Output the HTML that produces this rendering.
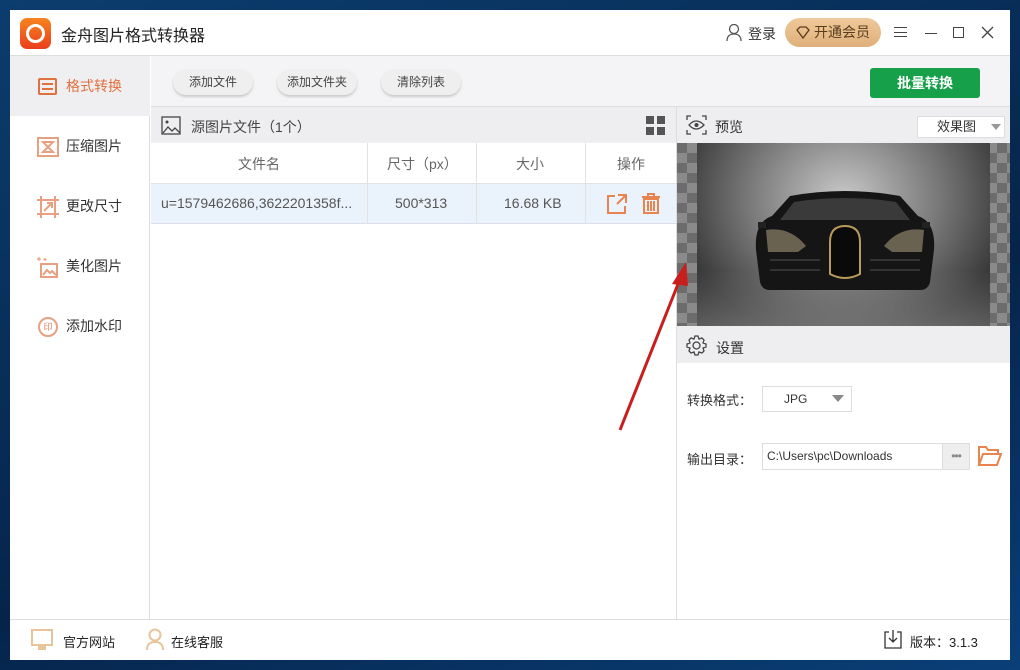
<!DOCTYPE html>
<html><head><meta charset="utf-8"><style>
*{margin:0;padding:0;box-sizing:border-box}
body{width:1020px;height:670px;background:linear-gradient(160deg,#0b3d6e,#06244a 60%,#0a3f78);font-family:"Liberation Sans","Noto Sans CJK SC",sans-serif;font-size:13px;color:#333;position:relative;overflow:hidden}
.win{position:absolute;left:10px;top:10px;width:1000px;height:650px;background:#fff}
.a{position:absolute}
.btn{position:absolute;top:69px;height:26px;border-radius:13px;background:#efefef;box-shadow:0 2px 2px #ccc;font-size:12px;color:#444;text-align:center;line-height:26px}
.side{position:absolute;left:0;width:140px;height:60px;font-size:14px;color:#333;line-height:60px;padding-left:56px}
.chk{background-color:#6c6c6c;background-image:linear-gradient(45deg,#8a8a8a 25%,transparent 25%,transparent 75%,#8a8a8a 75%),linear-gradient(45deg,#8a8a8a 25%,transparent 25%,transparent 75%,#8a8a8a 75%);background-size:20px 20px;background-position:0 0,10px 10px}
</style></head><body>
<div class="win"></div>
<div class="a" style="left:20px;top:18px;width:31px;height:31px;border-radius:7px;background:linear-gradient(#f7841e,#ea3e1c)"></div>
<div class="a" style="left:26px;top:24px;width:19px;height:19px;border-radius:50%;border:3px solid #fff"></div>
<div class="a" style="left:61px;top:22px;font-size:16px;color:#222">金舟图片格式转换器</div>
<svg class="a" style="left:726px;top:24px" width="16" height="17"><circle cx="8" cy="5" r="4.5" fill="none" stroke="#555" stroke-width="1.3"/><path d="M1 17c0-5 3-7 7-7s7 2 7 7" fill="none" stroke="#555" stroke-width="1.3"/></svg>
<div class="a" style="left:748px;top:24px;font-size:14px;color:#333">登录</div>
<div class="a" style="left:785px;top:18px;width:96px;height:29px;border-radius:15px;background:linear-gradient(#efc99a,#deb07a);font-size:14px;color:#5a3c1c;line-height:29px;padding-left:29px">开通会员</div>
<svg class="a" style="left:796px;top:26px" width="14" height="13"><path d="M1 4l3-3h6l3 3-6 8z" fill="none" stroke="#5a3c1c" stroke-width="1.3"/></svg>
<div class="a" style="left:894px;top:27px;width:13px;height:10px;border-top:1.3px solid #444;border-bottom:1.3px solid #444"></div>
<div class="a" style="left:894px;top:32px;width:13px;border-top:1.3px solid #444"></div>
<div class="a" style="left:925px;top:33px;width:12px;border-top:1.3px solid #444"></div>
<div class="a" style="left:953px;top:27px;width:11px;height:11px;border:1.3px solid #444"></div>
<svg class="a" style="left:981px;top:26px" width="13" height="13"><path d="M1 1l11 11M12 1L1 12" stroke="#444" stroke-width="1.3"/></svg>
<div class="a" style="left:10px;top:55px;width:1000px;border-top:1px solid #ddd"></div>
<div class="a" style="left:10px;top:56px;width:140px;height:563px;background:#fff;border-right:1px solid #ddd"></div>
<div class="side" style="left:10px;top:56px;background:#efeff1;color:#e07040">格式转换</div>
<div class="a" style="left:38px;top:78px;width:19px;height:17px;border:2px solid #e07040;border-radius:2px"></div>
<div class="a" style="left:42px;top:83px;width:11px;border-top:2px solid #e07040"></div><div class="a" style="left:42px;top:88px;width:11px;border-top:2px solid #e07040"></div>
<div class="side" style="left:10px;top:116px">压缩图片</div>
<svg class="a" style="left:37px;top:137px" width="22" height="20"><path d="M1 1h20v18H1zM6 5h10l-5 5 5 5H6l5-5z" fill="none" stroke="#e8a080" stroke-width="2"/></svg>
<div class="side" style="left:10px;top:176px">更改尺寸</div>
<svg class="a" style="left:37px;top:196px" width="22" height="22"><path d="M4 0v22M18 0v22M0 4h22M0 18h22M7 15l8-8M10 7h5v5" fill="none" stroke="#e8a080" stroke-width="2"/></svg>
<div class="side" style="left:10px;top:236px">美化图片</div>
<svg class="a" style="left:37px;top:256px" width="22" height="22"><path d="M4 8h16v13H4zM6 19l4-5 3 3 2-2 4 4" fill="none" stroke="#e8a080" stroke-width="2"/><path d="M2 1v4M0 3h4M8 2v3M6.5 3.5h3" stroke="#e8a080" stroke-width="1.2"/></svg>
<div class="side" style="left:10px;top:296px">添加水印</div>
<div class="a" style="left:38px;top:317px;width:20px;height:20px;border:2px solid #e8a080;border-radius:50%;font-size:9px;color:#e08060;text-align:center;line-height:16px">印</div>
<div class="a" style="left:151px;top:56px;width:859px;height:51px;background:#f4f4f6;border-bottom:1px solid #ddd"></div>
<div class="btn" style="left:173px;width:80px">添加文件</div>
<div class="btn" style="left:277px;width:80px">添加文件夹</div>
<div class="btn" style="left:381px;width:80px">清除列表</div>
<div class="a" style="left:870px;top:68px;width:110px;height:30px;border-radius:3px;background:#16a049;color:#fff;font-size:14px;font-weight:bold;text-align:center;line-height:30px">批量转换</div>
<div class="a" style="left:151px;top:107px;width:525px;height:36px;background:#eeeef1"></div>
<svg class="a" style="left:161px;top:116px" width="20" height="19"><rect x="1" y="1" width="18" height="17" fill="none" stroke="#444" stroke-width="1.3"/><path d="M2 17l5-6 4 4 3-3 5 5" fill="none" stroke="#444" stroke-width="1.3"/><circle cx="6" cy="6" r="1.5" fill="#444"/></svg>
<div class="a" style="left:191px;top:117px;font-size:14px;color:#444">源图片文件（1个）</div>
<div class="a" style="left:646px;top:116px;width:8px;height:8px;background:#555;box-shadow:11px 0 #555,0 11px #555,11px 11px #555"></div>
<div class="a" style="left:151px;top:143px;width:525px;height:41px;border-bottom:1px solid #e2e2e2"></div>
<div class="a" style="left:151px;top:184px;width:525px;height:40px;background:#eaf3fc;border-bottom:1px solid #dde"></div>
<div class="a" style="left:367px;top:143px;height:81px;border-left:1px solid #e2e2e2"></div>
<div class="a" style="left:476px;top:143px;height:81px;border-left:1px solid #e2e2e2"></div>
<div class="a" style="left:585px;top:143px;height:81px;border-left:1px solid #e2e2e2"></div>
<div class="a" style="left:238px;top:154px;font-size:14px;color:#666">文件名</div>
<div class="a" style="left:387px;top:154px;font-size:14px;color:#666">尺寸（px）</div>
<div class="a" style="left:516px;top:154px;font-size:14px;color:#666">大小</div>
<div class="a" style="left:617px;top:154px;font-size:14px;color:#666">操作</div>
<div class="a" style="left:161px;top:195px;font-size:14px;color:#555">u=1579462686,3622201358f...</div>
<div class="a" style="left:395px;top:195px;font-size:14px;color:#555">500*313</div>
<div class="a" style="left:504px;top:195px;font-size:14px;color:#555">16.68 KB</div>
<svg class="a" style="left:606px;top:193px" width="22" height="22"><path d="M9 3H2v17h17v-7M12 2h8v8M20 2l-9 9" fill="none" stroke="#e8844f" stroke-width="2"/></svg>
<svg class="a" style="left:641px;top:193px" width="20" height="21"><path d="M1 4h18M7 4V1h6v3M3 6h14v14H3zM7 8v10M10 8v10M13 8v10" fill="none" stroke="#e8844f" stroke-width="2"/></svg>
<div class="a" style="left:676px;top:107px;height:512px;border-left:1px solid #ddd"></div>
<div class="a" style="left:677px;top:107px;width:333px;height:36px;background:#eeeef1"></div>
<svg class="a" style="left:686px;top:115px" width="21" height="20"><path d="M1 5V1h4M16 1h4v4M20 15v4h-4M5 19H1v-4" fill="none" stroke="#444" stroke-width="1.3"/><path d="M3 10q7-8 15 0q-8 8-15 0z" fill="none" stroke="#444" stroke-width="1.3"/><circle cx="10.5" cy="10" r="2" fill="#444"/></svg>
<div class="a" style="left:715px;top:117px;font-size:14px;color:#333">预览</div>
<div class="a" style="left:917px;top:116px;width:88px;height:22px;background:#fff;border:1px solid #ddd;font-size:13px;line-height:20px;padding-left:19px;color:#333">效果图</div>
<div class="a" style="left:991px;top:124px;border:5px solid transparent;border-top:6px solid #999"></div>
<div class="a chk" style="left:677px;top:143px;width:333px;height:183px"></div>
<div class="a" style="left:697px;top:143px;width:293px;height:183px;background:radial-gradient(ellipse at 50% 30%,#c8c8c8,#7a7a7a 45%,#3a3a3a 80%,#222)"></div>
<div class="a" style="left:697px;top:270px;width:293px;height:56px;background:linear-gradient(transparent,rgba(150,150,150,.5))"></div>
<svg class="a" style="left:750px;top:190px" width="190" height="110">
<path d="M40 6Q95 -4 150 6L168 26Q186 32 184 60L180 92Q178 100 170 100H20Q12 100 10 92L6 60Q4 32 22 26Z" fill="#151515"/>
<path d="M44 12Q95 4 146 12L160 30H30Z" fill="#3a3a3a"/>
<path d="M8 32h8v6H8zM172 32h8v6h-8z" fill="#222"/>
<path d="M16 40Q40 36 56 56L48 62H18Z" fill="#6a6250"/>
<path d="M174 40Q150 36 134 56L142 62H172Z" fill="#6a6250"/>
<path d="M80 52Q80 36 95 36Q110 36 110 52V84Q95 92 80 84Z" fill="#0a0a0a" stroke="#b89a5a" stroke-width="2"/>
<path d="M20 70h50M120 70h50M20 80h50M120 80h50" stroke="#333" stroke-width="2"/>
</svg>
<div class="a" style="left:677px;top:326px;width:333px;height:37px;background:#eeeef1"></div>
<svg class="a" style="left:686px;top:335px" width="21" height="21"><circle cx="10.5" cy="10.5" r="3.5" fill="none" stroke="#444" stroke-width="1.3"/><path d="M9 1h3l1 3 3-1 2 2-1 3 3 1v3l-3 1 1 3-2 2-3-1-1 3H9l-1-3-3 1-2-2 1-3-3-1V9l3-1-1-3 2-2 3 1z" fill="none" stroke="#444" stroke-width="1.3"/></svg>
<div class="a" style="left:716px;top:338px;font-size:14px;color:#333">设置</div>
<div class="a" style="left:687px;top:390px;font-size:13px;color:#333">转换格式：</div>
<div class="a" style="left:762px;top:386px;width:90px;height:26px;border:1px solid #ddd;font-size:12px;line-height:24px;padding-left:21px">JPG</div>
<div class="a" style="left:832px;top:395px;border:6px solid transparent;border-top:7px solid #888"></div>
<div class="a" style="left:687px;top:449px;font-size:13px;color:#333">输出目录：</div>
<div class="a" style="left:762px;top:443px;width:208px;height:27px;border:1px solid #ddd;font-size:12px;line-height:25px;padding-left:4px;color:#333">C:\Users\pc\Downloads</div>
<div class="a" style="left:942px;top:444px;width:27px;height:25px;background:#eee;border-left:1px solid #ddd;color:#888;text-align:center;line-height:24px;font-size:12px;letter-spacing:-1px">•••</div>
<svg class="a" style="left:977px;top:444px" width="25" height="24"><path d="M2 21V3h7l2 3h10v4M2 21l4-11h18l-4 11z" fill="none" stroke="#e8844f" stroke-width="2"/></svg>
<svg class="a" style="left:600px;top:250px" width="100" height="190"><path d="M20 180L82 24" stroke="#c81e1e" stroke-width="3"/><path d="M86 12l-14 22 16 2z" fill="#c81e1e"/></svg>
<div class="a" style="left:10px;top:619px;width:1000px;border-top:1px solid #ddd"></div>
<div class="a" style="left:31px;top:629px;width:22px;height:17px;border:2px solid #e8c49a"></div>
<div class="a" style="left:38px;top:646px;width:8px;height:4px;background:#e8c49a"></div>
<div class="a" style="left:63px;top:632px;font-size:13px;color:#222">官方网站</div>
<svg class="a" style="left:145px;top:628px" width="20" height="22"><circle cx="10" cy="7" r="5.5" fill="none" stroke="#e8c49a" stroke-width="2"/><path d="M2 22c0-6 3-8 8-8s8 2 8 8" fill="none" stroke="#e8c49a" stroke-width="2"/></svg>
<div class="a" style="left:171px;top:632px;font-size:13px;color:#222">在线客服</div>
<svg class="a" style="left:884px;top:629px" width="18" height="20"><path d="M5 3H1v16h16V3h-4M9 1v12M5 9l4 4 4-4" fill="none" stroke="#333" stroke-width="1.3"/></svg>
<div class="a" style="left:910px;top:632px;font-size:13px;color:#222">版本：3.1.3</div>
</body></html>
